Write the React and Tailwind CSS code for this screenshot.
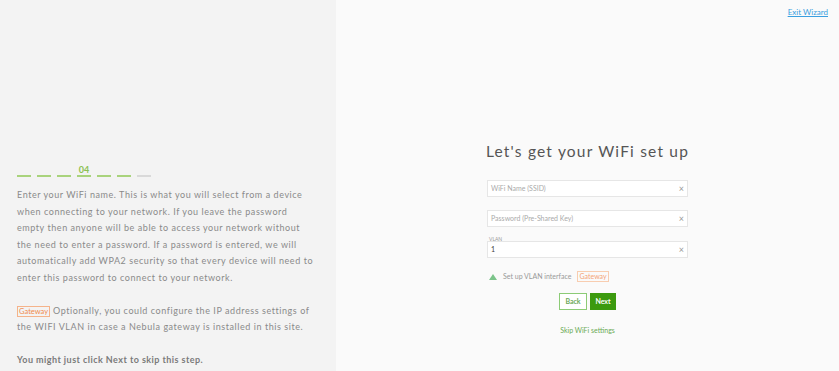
import React from "react";

const Field = ({ placeholder, value, label }) => (
  <div className="flex flex-col">
    {label && <span className="text-[5px] leading-[6px] text-[#999] pl-[2px] mb-[-1px]">{label}</span>}
    <div className="h-[17px] w-[201px] border border-[#e6e6e6] bg-white flex items-center justify-between px-[3px]">
      <span className={value ? "text-[7px] text-[#444]" : "text-[7px] text-[#aaa]"}>{value || placeholder}</span>
      <span className="text-[9px] text-[#999] leading-none">×</span>
    </div>
  </div>
);

const Gateway = () => (
  <span className="border border-[#f5b38a] text-[#f08a4b] text-[7.5px] px-[1px] leading-[9px] inline-block tracking-normal">
    Gateway
  </span>
);

export default function App() {
  const dashes = ["g", "g", "g", "n", "g", "g", "x"];
  return (
    <div className="w-[839px] h-[371px] flex overflow-hidden" style={{ fontFamily: "Lato, 'Open Sans', sans-serif" }}>
      {/* left */}
      <div className="w-[336px] h-full bg-[#f3f3f3] pl-[17px] pr-[8px] pt-[165px]">
        <div className="flex items-end gap-[6px] h-[12px]">
          {dashes.map((d, i) => (
            <div key={i} className="w-[14px] flex flex-col items-center">
              {d === "n" && <span className="text-[9px] font-bold text-[#8cc152] leading-[9px] mb-[1px]">04</span>}
              <div className={d === "x" ? "h-[2px] w-full bg-[#d9d9d9]" : "h-[2px] w-full bg-[#a9d37c]"} />
            </div>
          ))}
        </div>
        <p className="mt-[10px] text-[9px] tracking-[0.56px] leading-[16.6px] text-[#8a8a8a] whitespace-nowrap">
          Enter your WiFi name. This is what you will select from a device<br />
          when connecting to your network. If you leave the password<br />
          empty then anyone will be able to access your network without<br />
          the need to enter a password. If a password is entered, we will<br />
          automatically add WPA2 security so that every device will need to<br />
          enter this password to connect to your network.
        </p>
        <p className="mt-[16px] text-[9px] tracking-[0.56px] leading-[16.8px] text-[#8a8a8a] whitespace-nowrap">
          <Gateway /> Optionally, you could configure the IP address settings of<br />
          the WIFI VLAN in case a Nebula gateway is installed in this site.
        </p>
        <p className="mt-[16px] text-[9px] tracking-[0.45px] leading-[16px] font-bold text-[#7a7a7a]">You might just click Next to skip this step.</p>
      </div>
      {/* right */}
      <div className="flex-1 h-full bg-[#fafafa] flex flex-col">
        <div className="flex justify-end pr-[11px] pt-[6px]">
          <a className="text-[8px] text-[#3a9fe0] underline">Exit Wizard</a>
        </div>
        <div className="flex flex-col items-center mt-[122px]">
          <h1 className="text-[15.5px] tracking-[1.2px] text-[#555] leading-[22px]">Let's get your WiFi set up</h1>
          <div className="mt-[18px] flex flex-col gap-[13px]">
            <Field placeholder="WiFi Name (SSID)" />
            <Field placeholder="Password (Pre-Shared Key)" />
            <div className="-mt-[4px]">
              <Field label="VLAN" value="1" />
            </div>
          </div>
          <div className="w-[201px] mt-[13px] flex items-center gap-[6px] pl-[2px]">
            <svg width="8" height="6" viewBox="0 0 8 6"><path d="M0 6 L4 0 L8 6 Z" fill="#7cc48a" /></svg>
            <span className="text-[7px] text-[#999]">Set up VLAN interface</span>
            <span className="border border-[#f8cdb0] text-[#f4a477] text-[7px] px-[1px] leading-[9px]">Gateway</span>
          </div>
          <div className="mt-[11px] flex gap-[3px]">
            <button className="w-[28px] h-[17px] border border-[#8ccb76] bg-white text-[7px] font-bold text-[#6da85a]">Back</button>
            <button className="w-[26px] h-[17px] bg-[#3c9a0f] text-[7px] font-bold text-white">Next</button>
          </div>
          <span className="mt-[15px] text-[7px] text-[#6aaa55]">Skip WiFi settings</span>
        </div>
      </div>
    </div>
  );
}
